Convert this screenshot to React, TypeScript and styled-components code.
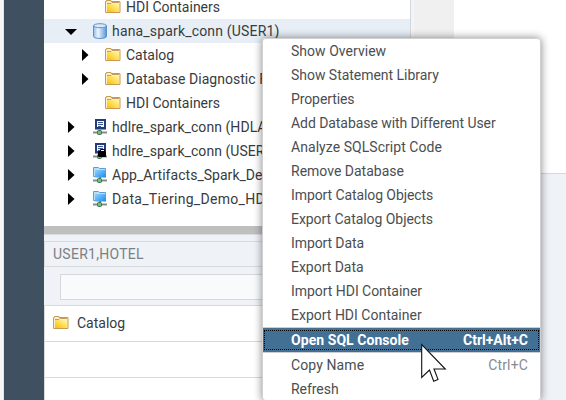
import React from 'react';
import styled, { createGlobalStyle } from 'styled-components';

const Global = createGlobalStyle`
  * { box-sizing: border-box; }
  body { margin: 0; overflow: hidden; font-family: Roboto, "Liberation Sans", sans-serif; font-size: 14px; color: #383b3e; }
`;

const Page = styled.div`
  position: relative; display: flex; width: 566px; height: 400px; overflow: hidden; background: #fff;
`;
const Edge = styled.div`width: 4px; background: #f7f7f7; border-right: 1px solid #e4e4e4;`;
const Sidebar = styled.div`width: 40px; background: #3f5161;`;
const Browser = styled.div`
  width: 367px; display: flex; flex-direction: column; border-right: 1px solid #d3d7db; overflow: hidden;
`;
const Tree = styled.div`height: 226px; display: flex; flex-direction: column; margin-top: -5px; flex: none;`;
const TreeRow = styled.div<{ $level: number; $selected?: boolean }>`
  flex: none; height: 24px; display: flex; align-items: center; white-space: nowrap;
  padding-left: ${(p) => (p.$level === 0 ? 20 : 34)}px;
  background: ${(p) => (p.$selected ? '#e7eef6' : 'transparent')};
`;
const Twisty = styled.span`width: 14px; height: 14px; flex: none; display: flex; align-items: center; justify-content: center;`;
const TreeIcon = styled.span<{ $folder: boolean }>`
  width: 16px; height: 16px; flex: none; display: flex;
  margin-left: ${(p) => (p.$folder ? 13 : 14)}px; margin-right: ${(p) => (p.$folder ? 5 : 4)}px;
`;
const Label = styled.span<{ $track: number }>`letter-spacing: ${(p) => p.$track}px;`;
const Splitter = styled.div`height: 9px; flex: none; margin-top: 5px; background: #bfbfbf; border-bottom: 1px solid #dadde0;`;
const Catalog = styled.div`flex: 1; display: flex; flex-direction: column; background: #eff3f8; padding-top: 6px;`;
const Heading = styled.div`
  height: 26px; flex: none; display: flex; align-items: center; padding-left: 8px;
  border: 1px solid #d8dade; border-right: 0; color: #7b7f83;
`;
const SearchArea = styled.div`height: 38px; flex: none; padding: 7px 12px 0 16px;`;
const Search = styled.div`height: 26px; background: #f9fafc; border: 1px solid #d5d7da;`;
const CatalogRow = styled.div`
  height: 36px; flex: none; display: flex; align-items: center; gap: 8px; padding: 0 0 2px 8px;
  background: #fff; border-top: 1px solid #d9d9d9; border-left: 1px solid #d9d9d9;
`;
const Gutter = styled.div`width: 43px; background: #f0f0f0; border-left: 3px solid #f2f4f7;`;
const Editor = styled.div`flex: 1; display: flex; flex-direction: column;`;
const Code = styled.div`height: 173px;`;
const Results = styled.div`flex: 1; background: #eff3f8; border-top: 1px solid #d5d9dc;`;

const Menu = styled.div`
  position: absolute; left: 262px; top: 38px; width: 279px; height: 363px; padding: 1px 1px 0;
  background: #fff; border-radius: 4px; box-shadow: 0 0 8px rgba(0,0,0,.48), inset 0 0 0 1px #d0d0d0;
`;
const MenuRow = styled.div<{ $active?: boolean }>`
  height: ${(p) => (p.$active ? 26 : 24)}px; display: flex; align-items: center; justify-content: space-between;
  padding: 0 12px 0 28px; white-space: nowrap; position: relative;
  color: ${(p) => (p.$active ? '#fff' : '#4b4e51')};
  background: ${(p) => (p.$active ? '#427095' : 'transparent')};
  font-weight: ${(p) => (p.$active ? 700 : 400)};
  border-top: ${(p) => (p.$active ? '1px solid #cccfd2' : '0')};
  border-bottom: ${(p) => (p.$active ? '1px solid #cccfd2' : '0')};
`;
const FocusRing = styled.span`position: absolute; inset: 2px 1px; border: 1px dotted #000;`;
const Shortcut = styled(Label)<{ $active?: boolean }>`color: ${(p) => (p.$active ? '#fff' : '#888b8e')};`;
const Pointer = styled.svg`position: absolute; left: 421px; top: 343px;`;

const Folder = () => (
  <svg width="16" height="16" viewBox="0 0 16 16">
    <defs>
      <linearGradient id="gold" x1="1" y1="0" x2="0" y2="1">
        <stop offset="0" stopColor="#fff5b4" /><stop offset=".55" stopColor="#fddb4a" /><stop offset="1" stopColor="#f7bd00" />
      </linearGradient>
    </defs>
    <path d="M.5 13.5v-11h1v-1h4.5v1h9v11z" fill="#fdf0cf" stroke="#c99a55" />
    <path d="M2 5h12v8H2z" fill="url(#gold)" /><path d="M2 4.5h4l1-1h7" stroke="#c99a55" fill="none" />
  </svg>
);
const Database = () => (
  <svg width="16" height="16" viewBox="0 0 16 16">
    <defs>
      <linearGradient id="cyl"><stop offset="0" stopColor="#8ebbe8" /><stop offset=".35" stopColor="#ecf6fe" /><stop offset="1" stopColor="#5795d6" /></linearGradient>
    </defs>
    <path d="M1.5 2.5v11c0 2.6 13 2.6 13 0v-11z" fill="url(#cyl)" stroke="#5f8fc8" />
    <ellipse cx="8" cy="2.7" rx="6.5" ry="2" fill="#d6e9fb" stroke="#6492c8" />
  </svg>
);
const Network = () => (
  <>
    <path d="M1 13.5h14" stroke="#8a8a8a" strokeWidth="2" /><path d="M8 10v3" stroke="#777" strokeWidth="2" />
    <rect x="5.5" y="11.5" width="4" height="4" rx="1" fill="#79ba83" stroke="#347548" />
  </>
);
const Server = ({ locked }: { locked?: boolean }) => (
  <svg width="16" height="16" viewBox="0 0 16 16">
    <Network />
    <rect x="4" y="1" width="9" height="8" fill="#f2f5fc" stroke="#233b7d" strokeWidth="2" />
    <path d="M6 3.5h5M6 5.5h5M6 7.5h3" stroke="#3e558e" /><path d="M3 10.5h11" stroke="#8999bd" />
    {locked && <><path d="M8.5 8V6.5h4V8" stroke="#000" fill="none" /><rect x="6" y="8" width="8" height="6" rx="1" fill="#000" /></>}
  </svg>
);
const RemoteFolder = () => (
  <svg width="16" height="16" viewBox="0 0 16 16">
    <defs>
      <linearGradient id="sky" x2="1" y2="1"><stop stopColor="#93d2ff" /><stop offset="1" stopColor="#168ae8" /></linearGradient>
    </defs>
    <Network />
    <path d="M1.5 9.5v-9h5l1 1h6v8z" fill="#b5e0fc" stroke="#609ccc" /><path d="M3 3h11v7.5H3z" fill="url(#sky)" />
  </svg>
);

type Kind = 'folder' | 'db' | 'server' | 'locked' | 'remote';
const icons: Record<Kind, React.ReactNode> = {
  folder: <Folder />, db: <Database />, server: <Server />, locked: <Server locked />, remote: <RemoteFolder />,
};
const tree: { text: string; kind: Kind; track: number; open?: boolean; leaf?: boolean }[] = [
  { text: 'HDI Containers', kind: 'folder', track: 0, leaf: true },
  { text: 'hana_spark_conn (USER1)', kind: 'db', track: 0.17, open: true },
  { text: 'Catalog', kind: 'folder', track: 0 },
  { text: 'Database Diagnostic Files', kind: 'folder', track: 0.04 },
  { text: 'HDI Containers', kind: 'folder', track: 0, leaf: true },
  { text: 'hdlre_spark_conn (HDLADMIN)', kind: 'server', track: 0.06 },
  { text: 'hdlre_spark_conn (USER1)', kind: 'locked', track: 0.06 },
  { text: 'App_Artifacts_Spark_Demo', kind: 'remote', track: 0.03 },
  { text: 'Data_Tiering_Demo_HDL', kind: 'remote', track: 0.3 },
];
const menu: { text: string; track: number; keys?: string; keyTrack?: number; active?: boolean }[] = [
  { text: 'Show Overview', track: 0.03 },
  { text: 'Show Statement Library', track: -0.03 },
  { text: 'Properties', track: -0.1 },
  { text: 'Add Database with Different User', track: -0.06 },
  { text: 'Analyze SQLScript Code', track: 0.05 },
  { text: 'Remove Database', track: 0 },
  { text: 'Import Catalog Objects', track: -0.09 },
  { text: 'Export Catalog Objects', track: -0.05 },
  { text: 'Import Data', track: -0.1 },
  { text: 'Export Data', track: -0.03 },
  { text: 'Import HDI Container', track: -0.04 },
  { text: 'Export HDI Container', track: 0 },
  { text: 'Open SQL Console', track: 0.06, keys: 'Ctrl+Alt+C', active: true },
  { text: 'Copy Name', track: 0.1, keys: 'Ctrl+C', keyTrack: 0.15 },
  { text: 'Refresh', track: -0.05 },
];

export default function App() {
  return (
    <Page>
      <Global />
      <Edge />
      <Sidebar />
      <Browser>
        <Tree>
          {tree.map((n, i) => (
            <TreeRow key={i} $level={n.kind === 'folder' ? 1 : 0} $selected={n.open}>
              <Twisty>
                {!n.leaf && (
                  <svg width="14" height="14" viewBox="0 0 14 14">
                    <path d={n.open ? 'M1 5h12L7 11z' : 'M4 1v12l6.5-6z'} fill="#000" />
                  </svg>
                )}
              </Twisty>
              <TreeIcon $folder={n.kind === 'folder'}>{icons[n.kind]}</TreeIcon>
              <Label $track={n.track}>{n.text}</Label>
            </TreeRow>
          ))}
        </Tree>
        <Splitter />
        <Catalog>
          <Heading><Label $track={0.27}>USER1,HOTEL</Label></Heading>
          <SearchArea><Search /></SearchArea>
          <CatalogRow><Folder /><Label $track={0}>Catalog</Label></CatalogRow>
          <CatalogRow />
          <CatalogRow />
        </Catalog>
      </Browser>
      <Gutter />
      <Editor><Code /><Results /></Editor>
      <Menu>
        {menu.map((m) => (
          <MenuRow key={m.text} $active={m.active}>
            <Label $track={m.track}>{m.text}</Label>
            {m.keys && <Shortcut $track={m.keyTrack ?? 0} $active={m.active}>{m.keys}</Shortcut>}
            {m.active && <FocusRing />}
          </MenuRow>
        ))}
      </Menu>
      <Pointer width="27" height="40" viewBox="0 0 27 40">
        <path d="M.7 1.5v33l7.8-7.5 4.2 11.2 4.3-1.8-4-10.4h11.3z" fill="#fff" stroke="#111" strokeWidth="1.1" />
      </Pointer>
    </Page>
  );
}
